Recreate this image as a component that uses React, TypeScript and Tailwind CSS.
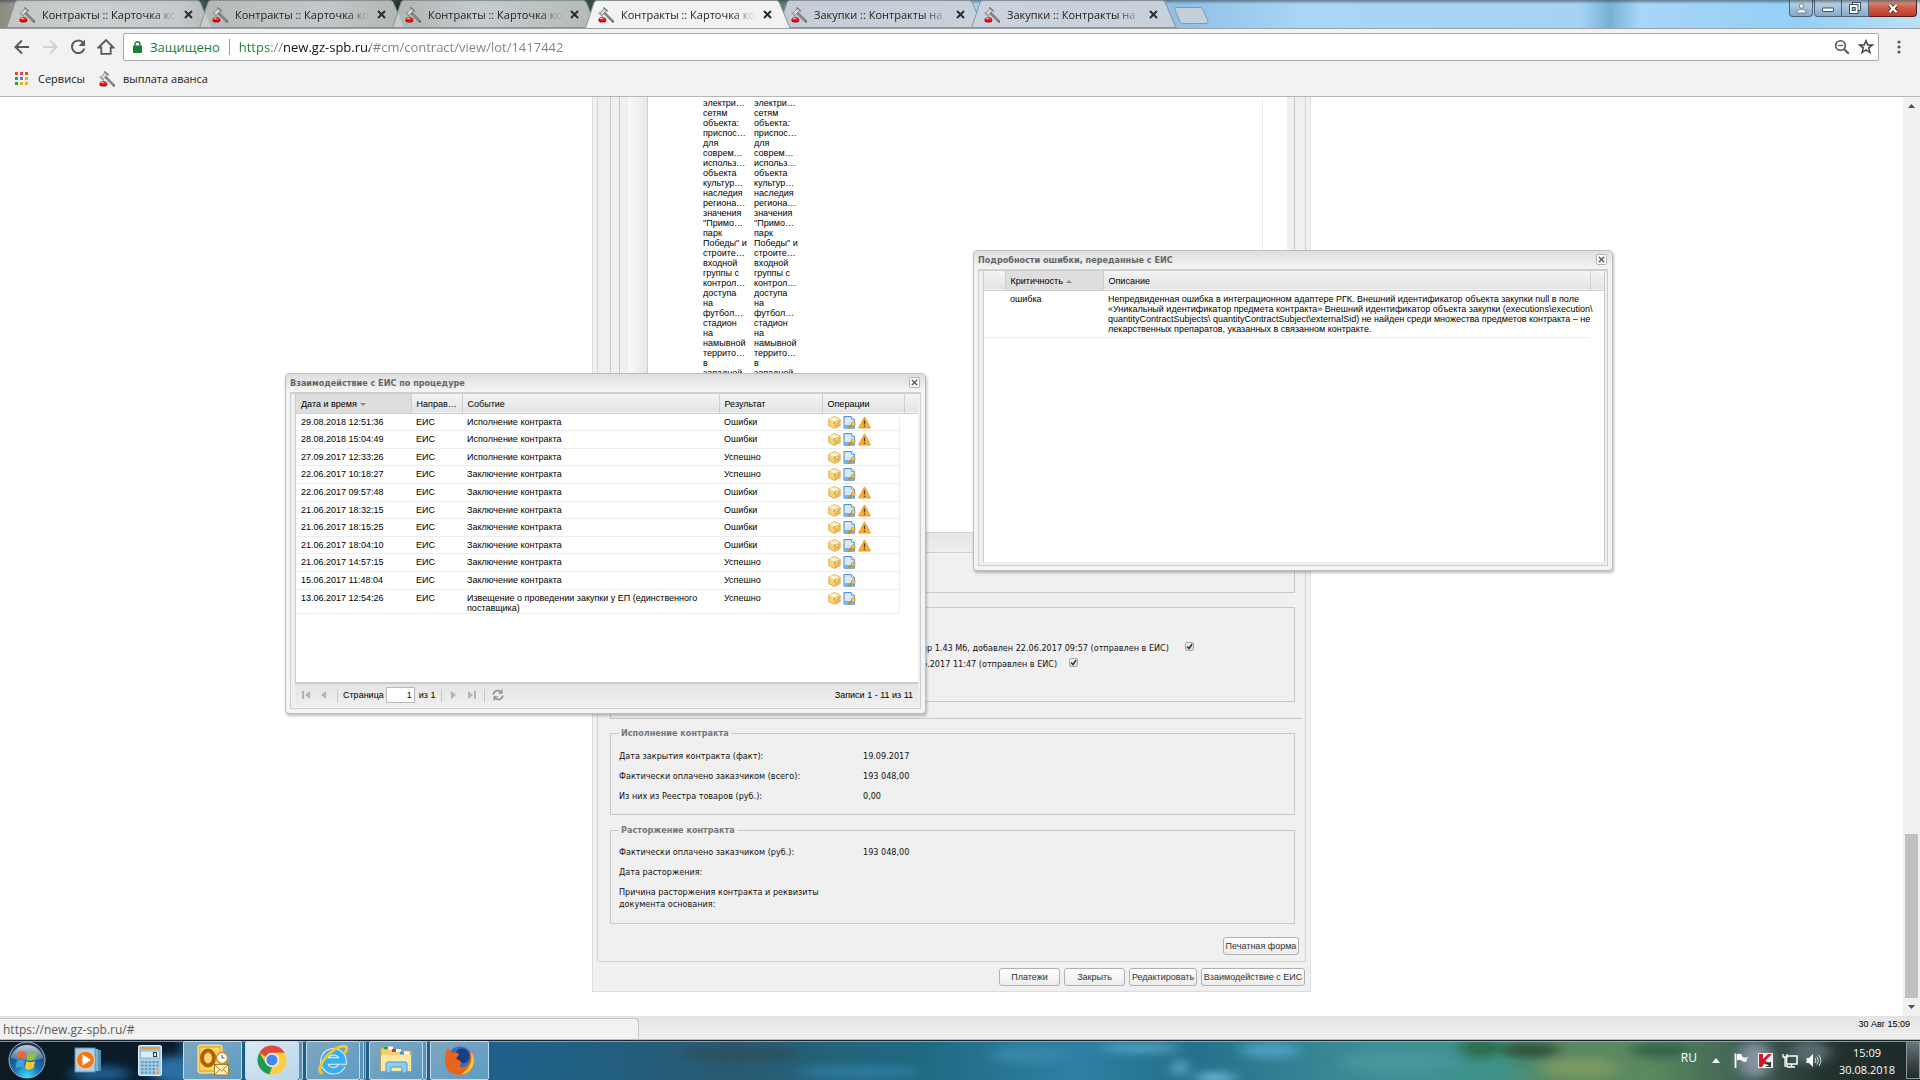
import React from 'react'

interface EventRow {
  date: string
  event: string
  ok: boolean
}

const tabs = [
  { title: 'Контракты :: Карточка ко', active: false },
  { title: 'Контракты :: Карточка ко', active: false },
  { title: 'Контракты :: Карточка ко', active: false },
  { title: 'Контракты :: Карточка ко', active: true },
  { title: 'Закупки :: Контракты на', active: false },
  { title: 'Закупки :: Контракты на', active: false },
]

const events: EventRow[] = [
  { date: '29.08.2018 12:51:36', event: 'Исполнение контракта', ok: false },
  { date: '28.08.2018 15:04:49', event: 'Исполнение контракта', ok: false },
  { date: '27.09.2017 12:33:26', event: 'Исполнение контракта', ok: true },
  { date: '22.06.2017 10:18:27', event: 'Заключение контракта', ok: true },
  { date: '22.06.2017 09:57:48', event: 'Заключение контракта', ok: false },
  { date: '21.06.2017 18:32:15', event: 'Заключение контракта', ok: false },
  { date: '21.06.2017 18:15:25', event: 'Заключение контракта', ok: false },
  { date: '21.06.2017 18:04:10', event: 'Заключение контракта', ok: false },
  { date: '21.06.2017 14:57:15', event: 'Заключение контракта', ok: true },
  { date: '15.06.2017 11:48:04', event: 'Заключение контракта', ok: true },
  { date: '13.06.2017 12:54:26', event: 'Извещение о проведении закупки у ЕП (единственного поставщика)', ok: true },
]

const words = [
  'электри…', 'сетям', 'объекта:', 'приспос…', 'для', 'соврем…', 'использ…', 'объекта', 'культур…',
  'наследия', 'региона…', 'значения', '"Примо…', 'парк', 'Победы" и', 'строите…', 'входной', 'группы с',
  'контрол…', 'доступа', 'на', 'футбол…', 'стадион', 'на', 'намывной', 'террито…', 'в', 'западной',
]

/* ---------- icons ---------- */

function Gavel() {
  return (
    <svg className="w-4 h-4 shrink-0" viewBox="0 0 16 16">
      <path d="M7 6.5L15 14.5" stroke="#5d5d5d" strokeWidth="2.4" strokeLinecap="round" />
      <path d="M7 6.5L14.5 14" stroke="#b5b5b5" strokeWidth="1" />
      <path d="M1.6 6.4L6.4 1.2L8.8 3.2L4 8.4Z" fill="#dcdcdc" stroke="#777" strokeWidth="0.8" />
      <path d="M5.6 0.8L9.4 4" stroke="#777" strokeWidth="1.3" strokeLinecap="round" />
      <path d="M1 6L4.6 9.2" stroke="#999" strokeWidth="1.3" strokeLinecap="round" />
      <ellipse cx="4.4" cy="13" rx="4" ry="2.6" fill="#b80d0d" />
      <ellipse cx="4.4" cy="11.8" rx="3.4" ry="1.8" fill="#ee2b2b" />
      <ellipse cx="3.4" cy="11.4" rx="1.2" ry="0.7" fill="#ffc9c9" />
    </svg>
  )
}

function BoxIcon() {
  return (
    <svg className="w-[13px] h-[13px]" viewBox="0 0 13 13">
      <path d="M6.5 0.5L12.2 3.2V9.6L6.5 12.5L0.8 9.6V3.2Z" fill="#f6d27a" stroke="#d3a040" strokeWidth="0.8" />
      <path d="M6.5 0.9L11.8 3.3L6.5 6L1.2 3.3Z" fill="#fdecb8" />
      <path d="M6.5 6L11.8 3.4V9.4L6.5 12.1Z" fill="#eab950" />
      <path d="M4 2L9 4.6V6.8L7.6 7.4V5.4L2.9 2.6Z" fill="#fffbe8" />
      <path d="M6.5 6V7.6M6.5 6L8.6 5" stroke="#b07d22" strokeWidth="0.8" />
    </svg>
  )
}

function DocIcon() {
  return (
    <svg className="w-[13px] h-[13px]" viewBox="0 0 13 13">
      <path d="M1 0.6H8.4L11.4 3.4V12.2H1Z" fill="#d8e9fb" stroke="#4a86cc" strokeWidth="1" />
      <path d="M8.4 0.8V3.4H11.2" fill="#fff" stroke="#4a86cc" strokeWidth="0.7" />
      <path d="M1.6 9H11V11.8H1.6Z" fill="#6fb2ec" />
      <path d="M6 11.8L9.4 8.4" stroke="#c58c1e" strokeWidth="2" strokeLinecap="round" />
      <circle cx="10.2" cy="8" r="2.1" fill="#f2c34c" stroke="#c58c1e" strokeWidth="0.6" />
    </svg>
  )
}

function WarnIcon() {
  return (
    <svg className="w-[13px] h-[13px]" viewBox="0 0 13 13">
      <path d="M6.5 0.9L12.4 12H0.6Z" fill="#fbb03c" stroke="#ee9a2a" strokeWidth="1" strokeLinejoin="round" />
      <path d="M6.5 4.4V8.4" stroke="#5c3a0a" strokeWidth="1.3" />
      <circle cx="6.5" cy="10.2" r="0.8" fill="#5c3a0a" />
    </svg>
  )
}

function SortArrow({ up }: { up?: boolean }) {
  return (
    <svg className="ml-[3px] inline-block w-[6px] h-[3px] align-middle" viewBox="0 0 6 3">
      <path d={up ? 'M0 3L3 0L6 3Z' : 'M0 0L3 3L6 0Z'} fill="#8a8a8a" />
    </svg>
  )
}

/* ---------- browser chrome ---------- */

function BrowserTab({ title, active, index }: { title: string; active: boolean; index: number }) {
  const fill = active ? '#f2f2f2' : index < 3 ? 'rgba(205,208,206,0.84)' : 'rgba(203,210,218,0.93)'
  return (
    <div className={`relative flex items-center h-7 w-[193px] pl-[13px] pr-1 ${active ? 'z-10' : ''}`}>
      <svg className="absolute left-0 top-0 w-[208px] h-7 -z-0" viewBox="0 0 208 28">
        <path d="M0.5 28L9 2.5Q9.8 0.5 12 0.5H191Q193.5 0.5 194.3 2.5L205 28" fill={fill} stroke="#8b9097" strokeWidth="1" />
        {!active && <path d="M0 27.5H206" stroke="#8b9097" />}
      </svg>
      <div className="relative flex items-center w-full min-w-0 pt-px">
        <Gavel />
        <button className="ml-[7px] flex-1 min-w-0 whitespace-nowrap text-left text-[11px] leading-4 text-[#222] [mask-image:linear-gradient(90deg,#000_82%,transparent)]">
          {title}
        </button>
        <button aria-label="Закрыть вкладку" className="ml-1 w-[14px] h-[14px] shrink-0 flex items-center justify-center">
          <svg className="w-[9px] h-[9px]" viewBox="0 0 9 9"><path d="M1 1L8 8M8 1L1 8" stroke="#2b2b2b" strokeWidth="2" /></svg>
        </button>
      </div>
    </div>
  )
}

function WindowButtons() {
  const glass = 'h-[17px] flex items-center justify-center border border-t-0 border-[#4d6377] bg-linear-to-b from-[#c3d8ea] via-[#a8c4dc] via-45% to-[#86a8c6]'
  return (
    <div className="ml-auto flex items-start mr-[3px] self-start">
      <button aria-label="Пользователь" className={`${glass} w-6 rounded-b mr-px`}>
        <svg className="w-[11px] h-[11px]" viewBox="0 0 11 11"><circle cx="5.5" cy="3" r="2.2" fill="#fff" stroke="#4d6377" strokeWidth="0.7" /><path d="M1 10V7.5Q5.5 4.8 10 7.5V10Z" fill="#fff" stroke="#4d6377" strokeWidth="0.7" /></svg>
      </button>
      <button aria-label="Свернуть" className={`${glass} w-7 rounded-bl`}>
        <svg className="w-3 h-3" viewBox="0 0 12 12"><rect x="0.5" y="6" width="11" height="3.5" rx="0.5" fill="#fff" stroke="#3d4f5f" /></svg>
      </button>
      <button aria-label="Восстановить" className={`${glass} w-[27px] border-l-0`}>
        <svg className="w-3 h-3" viewBox="0 0 12 12"><rect x="3.5" y="0.5" width="8" height="8" fill="#fff" stroke="#3d4f5f" /><rect x="0.5" y="2.5" width="8.5" height="9" fill="#fff" stroke="#3d4f5f" /><rect x="3.2" y="5.5" width="3" height="3" fill="#8ba" stroke="#3d4f5f" /></svg>
      </button>
      <button aria-label="Закрыть" className="h-[17px] w-12 flex items-center justify-center rounded-br border border-l-0 border-t-0 border-[#5b1a14] bg-linear-to-b from-[#e2a497] via-[#cf5e4b] via-45% to-[#c13a25]">
        <svg className="w-3 h-[11px]" viewBox="0 0 12 11"><path d="M2.5 1.8L9.5 9.2M9.5 1.8L2.5 9.2" stroke="#4a2a2a" strokeWidth="4" /><path d="M2.5 1.8L9.5 9.2M9.5 1.8L2.5 9.2" stroke="#fff" strokeWidth="2.4" /></svg>
      </button>
    </div>
  )
}

function TabStrip() {
  return (
    <div className="relative isolate flex items-end h-[29px] pl-[6px] border-b border-[#9aa0a6] bg-[linear-gradient(90deg,#8d8b80_0px,#b9c4d0_90px,#9aa8b5_180px,#2f4a3f_208px,#8fa0ac_320px,#1e332a_400px,#9cb6cf_480px,#31533f_590px,#55806c_780px,#7f9fbe_820px,#8fb2cc_950px,#a7d2f7_975px,#8fc0e4_1180px,#a9d5f6_1300px,#a6d2f3_1580px,#76b2d4_1610px,#a9d5f8_1640px,#93d0f5_1800px,#bcdff5_1920px)]">
      <div className="absolute inset-x-0 top-0 h-1 bg-linear-to-b from-[#33424e] to-transparent opacity-60" />
      {tabs.map((t, i) => <BrowserTab key={i} title={t.title} active={t.active} index={i} />)}
      <button aria-label="Новая вкладка" className="ml-[10px] mb-1 w-[35px] h-[17px]">
        <svg className="w-[35px] h-[17px]" viewBox="0 0 35 17"><path d="M2 0.5H26Q28 0.5 29 2.5L34 14Q34.5 16.5 32 16.5H9Q7 16.5 6 14.5L1 2.5Q0.5 0.5 2 0.5Z" fill="#c3cfda" stroke="#8796a3" /></svg>
      </button>
      <WindowButtons />
    </div>
  )
}

function Toolbar() {
  return (
    <div className="flex items-center h-9 bg-[#f2f2f2] pl-[13px] pr-[13px]">
      <div className="flex items-center gap-[10px]">
        <button aria-label="Назад"><svg className="w-[18px] h-[18px]" viewBox="0 0 18 18" fill="none" stroke="#5a5a5a" strokeWidth="2"><path d="M16 9H3M9 2.5L2.5 9L9 15.5" /></svg></button>
        <button aria-label="Вперёд"><svg className="w-[18px] h-[18px]" viewBox="0 0 18 18" fill="none" stroke="#d2d2d2" strokeWidth="2"><path d="M2 9H15M9 2.5L15.5 9L9 15.5" /></svg></button>
        <button aria-label="Обновить"><svg className="w-[18px] h-[18px]" viewBox="0 0 18 18"><path d="M14.3 5A6.3 6.3 0 1 0 15.3 10.5" fill="none" stroke="#5a5a5a" strokeWidth="2" /><path d="M16 1.5V8H9.5Z" fill="#5a5a5a" /></svg></button>
        <button aria-label="Домой"><svg className="w-[18px] h-[18px]" viewBox="0 0 18 18" fill="none" stroke="#5a5a5a" strokeWidth="1.8"><path d="M1.5 9.5L9 2L16.5 9.5H13.7V15.8H4.3V9.5Z" /></svg></button>
      </div>
      <div className="ml-2 flex-1 flex items-center h-7 bg-white border border-[#a9a9a9] rounded-xs pl-[9px] pr-1">
        <svg className="w-[9px] h-3" viewBox="0 0 9 12"><path d="M2 5V3.2A2.5 2.5 0 0 1 7 3.2V5" fill="none" stroke="#188038" strokeWidth="1.4" /><rect y="4.5" width="9" height="7.5" rx="0.8" fill="#188038" /></svg>
        <span className="ml-2 text-[13px] leading-5 text-[#188038]">Защищено</span>
        <span className="mx-[9px] w-px h-4 bg-[#9a9a9a]" />
        <input
          aria-label="Адрес"
          defaultValue="https://new.gz-spb.ru/#cm/contract/view/lot/1417442"
          className="flex-1 min-w-0 text-[13px] leading-5 outline-none text-transparent caret-black bg-clip-text bg-[linear-gradient(90deg,#188038_32px,#808080_32px,#808080_45px,#111_45px,#111_131px,#808080_131px)]"
        />
        <button aria-label="Масштаб" className="mr-2"><svg className="w-4 h-4" viewBox="0 0 16 16" fill="none" stroke="#555"><circle cx="6.5" cy="6.5" r="4.8" strokeWidth="1.6" /><path d="M4.2 6.5H8.8" strokeWidth="1.2" /><path d="M10 10L14.8 14.8" strokeWidth="2" /></svg></button>
        <button aria-label="Закладка"><svg className="w-4 h-4" viewBox="0 0 16 16" fill="none" stroke="#444" strokeWidth="1.5"><path d="M8 1.8L9.8 6H14.4L10.7 8.9L12 13.6L8 10.9L4 13.6L5.3 8.9L1.6 6H6.2Z" /></svg></button>
      </div>
      <button aria-label="Меню" className="ml-[12px] w-4 h-4 flex items-center justify-center">
        <svg className="w-1 h-[14px]" viewBox="0 0 4 14" fill="#5a5a5a"><circle cx="2" cy="2" r="1.6" /><circle cx="2" cy="7" r="1.6" /><circle cx="2" cy="12" r="1.6" /></svg>
      </button>
    </div>
  )
}

function Bookmarks() {
  const colors = ['#e8453c', '#e8453c', '#e8453c', '#2a9d4e', '#4284f3', '#f2b01e', '#2a9d4e', '#f2b01e', '#f2b01e']
  return (
    <div className="flex items-center h-8 pb-1 bg-[#f2f2f2] border-b border-[#b6b6b6] pl-[15px] text-[11px] leading-4 text-[#1b1b1b]">
      <a href="#apps" className="flex items-center">
        <svg className="w-[13px] h-[13px]" viewBox="0 0 13 13">
          {colors.map((c, i) => <rect key={i} x={(i % 3) * 5} y={Math.floor(i / 3) * 5} width="3" height="3" fill={c} />)}
        </svg>
        <span className="ml-[10px]">Сервисы</span>
      </a>
      <a href="#avans" className="ml-[14px] flex items-center"><Gavel /><span className="ml-2">выплата аванса</span></a>
    </div>
  )
}

/* ---------- page ---------- */

function GroupBox({ title, children, className }: { title: string; children: React.ReactNode; className?: string }) {
  return (
    <fieldset className={`border border-[#c9c9c9] pl-2 ${className ?? ''}`}>
      <legend className="px-[2px] font-bold leading-3 text-[#777]">{title}</legend>
      {children}
    </fieldset>
  )
}

function Field({ label, value }: { label: string; value?: string }) {
  return (
    <div className="flex min-h-5 py-1">
      <span className="w-[244px] pr-8 leading-3 text-[#111]">{label}</span>
      <span className="leading-3 text-[#111]">{value}</span>
    </div>
  )
}

function ExtButton({ children, className }: { children: React.ReactNode; className: string }) {
  return (
    <button className={`h-[18px] rounded-[3px] border border-[#b0b0b0] bg-linear-to-b from-white to-[#ececec] text-[9px] leading-4 whitespace-nowrap text-[#333] font-['Liberation_Sans',sans-serif] ${className}`}>
      {children}
    </button>
  )
}

function Tick({ id }: { id: string }) {
  return (
    <span className="relative inline-block w-[9px] h-[9px] shrink-0">
      <input id={id} type="checkbox" defaultChecked className="block appearance-none w-[9px] h-[9px] rounded-xs border border-[#a8a8a8] bg-linear-to-b from-[#f0f0f0] to-[#dcdcdc]" />
      <svg className="absolute inset-0 pointer-events-none" viewBox="0 0 9 9"><path d="M2 4.5L4 6.5L7.2 2" fill="none" stroke="#333" strokeWidth="1.5" /></svg>
    </span>
  )
}

function ContractPanel() {
  return (
    <div className="mx-auto w-[719px] border border-t-0 border-[#dcdcdc] bg-[#f0f0f0] px-1 text-[9px] font-['DejaVu_Sans_Condensed','DejaVu_Sans',sans-serif]">
      <div className="border border-t-0 border-[#d4d4d4] pb-[6px]">
        <div className="ml-3 mr-[10px] h-[496px] border border-t-0 border-[#c9c9c9] pl-2 pr-[7px]">
          <div className="border-l border-[#c9c9c9]">
            <div className="flex h-[435px] pl-2">
              <div className="w-5 border-r border-[#d0d0d0] bg-linear-to-r from-[#f9f9f9] to-[#e9e9ec]" />
              <div className="flex flex-1 bg-white pt-px pl-[55px] gap-2 leading-[10px] overflow-hidden font-['Liberation_Sans',sans-serif]">
                <div className="w-[43px] whitespace-nowrap">{words.map((w, i) => <div key={i}>{w}</div>)}</div>
                <div className="w-[43px] whitespace-nowrap">{words.map((w, i) => <div key={i}>{w}</div>)}</div>
                <div className="ml-auto mr-6 w-px bg-[#ededed]" />
              </div>
            </div>
            <div className="h-[21px] border-y border-[#d0d0d0] bg-linear-to-b from-[#e6e6e6] to-[#eeeeee]" />
          </div>
        </div>
        <div className="ml-3 mr-[3px] border-b border-l border-[#c9c9c9] pt-[14px] pb-4">
          <div className="mr-[7px] h-[95px] border border-l-0 border-[#c9c9c9] pt-[34px] pl-[311px] leading-3 text-[#111]">
            <div className="flex h-4 items-start">
              <label htmlFor="file1" className="whitespace-nowrap">ер 1.43 Мб, добавлен 22.06.2017 09:57 (отправлен в ЕИС)</label>
              <span className="ml-4"><Tick id="file1" /></span>
            </div>
            <div className="flex h-4 items-start">
              <label htmlFor="file2" className="whitespace-nowrap">6.2017 11:47 (отправлен в ЕИС)</label>
              <span className="ml-3"><Tick id="file2" /></span>
            </div>
          </div>
        </div>
        <div className="ml-3 mr-[10px] pt-2 flex flex-col gap-[9px]">
          <GroupBox title="Исполнение контракта" className="h-[88px] pt-[7px]">
            <Field label="Дата закрытия контракта (факт):" value="19.09.2017" />
            <Field label="Фактически оплачено заказчиком (всего):" value="193 048,00" />
            <Field label="Из них из Реестра товаров (руб.):" value="0,00" />
          </GroupBox>
          <GroupBox title="Расторжение контракта" className="h-[100px] pt-[6px]">
            <Field label="Фактически оплачено заказчиком (руб.):" value="193 048,00" />
            <Field label="Дата расторжения:" />
            <Field label="Причина расторжения контракта и реквизиты документа основания:" />
          </GroupBox>
        </div>
        <div className="mt-[13px] mr-[6px] flex justify-end"><ExtButton className="w-[76px]">Печатная форма</ExtButton></div>
      </div>
      <div className="flex justify-end gap-1 pt-[6px] pb-[5px] pr-px">
        <ExtButton className="w-[61px]">Платежи</ExtButton>
        <ExtButton className="w-[61px]">Закрыть</ExtButton>
        <ExtButton className="w-[68px]">Редактировать</ExtButton>
        <ExtButton className="w-[104px]">Взаимодействие с ЕИС</ExtButton>
      </div>
    </div>
  )
}

function ExtWindow({ title, className, children }: { title: string; className: string; children: React.ReactNode }) {
  return (
    <section className={`absolute flex flex-col rounded-[4px] border border-[#bdbdbd] bg-[#f4f4f4] px-1 pb-1 shadow-[1px_2px_3px_rgba(0,0,0,0.25)] ${className}`}>
      <header className="-mx-1 flex h-[18px] shrink-0 items-center justify-between rounded-t-[4px] bg-linear-to-b from-[#dedede] to-[#f5f5f5] pb-px pl-1 pr-[5px]">
        <h2 className="text-[9px] leading-3 font-bold text-[#666] font-['DejaVu_Sans_Condensed','DejaVu_Sans',sans-serif]">{title}</h2>
        <button aria-label="Закрыть окно" className="w-[11px] h-[11px] flex items-center justify-center rounded-xs border border-[#b4b4b4] bg-white">
          <svg className="w-[7px] h-[7px]" viewBox="0 0 7 7"><path d="M0.8 0.8L6.2 6.2M6.2 0.8L0.8 6.2" stroke="#555" strokeWidth="1.3" /></svg>
        </button>
      </header>
      <div className="flex min-h-0 flex-1 flex-col border border-t-2 border-[#cfcfcf] bg-[#efefef] pl-1 pr-[2px] pb-[2px] text-[9px] leading-[10px] text-black font-['Liberation_Sans',sans-serif]">
        {children}
      </div>
    </section>
  )
}

const th = 'h-[19px] border-r border-[#cfcfcf] pl-[5px] pt-px text-left font-normal whitespace-nowrap overflow-hidden'

function EventsWindow() {
  return (
    <ExtWindow title="Взаимодействие с ЕИС по процедуре" className="left-[285px] top-[276px] w-[641px] h-[341px]">
      <div className="flex-1 border-l border-b-2 border-[#cbcbcb] bg-white">
        <table className="w-full table-fixed border-collapse">
          <colgroup>
            <col className="w-[115px]" /><col className="w-[51px]" /><col className="w-[257px]" /><col className="w-[103px]" /><col className="w-[77px]" /><col className="w-[5px]" /><col />
          </colgroup>
          <thead className="bg-linear-to-b from-[#f4f4f4] to-[#e4e4e4] border-b border-[#cfcfcf]">
            <tr>
              <th className={`${th} bg-[#dedede]`}>Дата и время<SortArrow /></th>
              <th className={th}>Направ…</th>
              <th className={th}>Событие</th>
              <th className={th}>Результат</th>
              <th className={th} colSpan={2}>Операции</th>
              <th />
            </tr>
          </thead>
          <tbody>
            {events.map(e => (
              <tr key={e.date} className="h-[18px] nth-[5n+1]:h-[17px] nth-[5n+3]:h-[17px] last:h-[27px] align-top [&>td]:border-b [&>td]:border-[#ededed] [&>td]:pl-[5px] [&>td]:pt-[3px]">
                <td>{e.date}</td>
                <td>ЕИС</td>
                <td>{e.event}</td>
                <td>{e.ok ? 'Успешно' : 'Ошибки'}</td>
                <td className="border-r">
                  <div className="-mt-px -mb-1 flex h-[13px] gap-[2px] pl-px">
                    <button aria-label="Пакет"><BoxIcon /></button>
                    <button aria-label="Документ"><DocIcon /></button>
                    {!e.ok && <button aria-label="Ошибка"><WarnIcon /></button>}
                  </div>
                </td>
              </tr>
            ))}
          </tbody>
        </table>
      </div>
      <div className="flex h-[22px] shrink-0 items-center bg-linear-to-b from-[#e4e4e4] to-[#efefef] pl-[7px] pr-[5px]">
        <button aria-label="Первая" className="w-3"><svg className="w-[9px] h-2" viewBox="0 0 9 8" fill="#b3b3b3"><rect width="2" height="8" /><path d="M8 0V8L3 4Z" /></svg></button>
        <button aria-label="Предыдущая" className="ml-[7px] w-2"><svg className="w-[5px] h-2" viewBox="0 0 5 8" fill="#b3b3b3"><path d="M5 0V8L0 4Z" /></svg></button>
        <span className="ml-2 h-[13px] w-px bg-[#c9c9c9]" />
        <label htmlFor="page" className="ml-[5px]">Страница</label>
        <input id="page" defaultValue="1" className="ml-[2px] h-4 w-[29px] border border-[#b9b9b9] bg-white pr-[2px] text-right" />
        <span className="ml-1">из 1</span>
        <span className="ml-[6px] h-[13px] w-px bg-[#c9c9c9]" />
        <button aria-label="Следующая" className="ml-[9px] w-[6px]"><svg className="w-[5px] h-2" viewBox="0 0 5 8" fill="#b3b3b3"><path d="M0 0V8L5 4Z" /></svg></button>
        <button aria-label="Последняя" className="ml-[10px] w-[9px]"><svg className="w-[9px] h-2" viewBox="0 0 9 8" fill="#b3b3b3"><rect x="7" width="2" height="8" /><path d="M1 0V8L6 4Z" /></svg></button>
        <span className="ml-[8px] h-[13px] w-px bg-[#c9c9c9]" />
        <button aria-label="Обновить список" className="ml-[7px]">
          <svg className="w-3 h-3" viewBox="0 0 12 12" fill="none" stroke="#8a8a8a" strokeWidth="1.6"><path d="M1.2 5.5A4.5 4.5 0 0 1 9 3M10.8 6.5A4.5 4.5 0 0 1 3 9" /><path d="M9.8 0.5V4H6.5M2.2 11.5V8H5.5" strokeWidth="1.3" /></svg>
        </button>
        <span className="ml-auto">Записи 1 - 11 из 11</span>
      </div>
    </ExtWindow>
  )
}

function ErrorWindow() {
  return (
    <ExtWindow title="Подробности ошибки, переданные с ЕИС" className="left-[973px] top-[153px] w-[640px] h-[321px]">
      <div className="mb-px flex-1 border-x border-[#cbcbcb] bg-white">
        <table className="w-full table-fixed border-collapse">
          <colgroup>
            <col className="w-[21px]" /><col className="w-[98px]" /><col className="w-[487px]" /><col />
          </colgroup>
          <thead className="bg-linear-to-b from-[#f4f4f4] to-[#e4e4e4] border-b border-[#cfcfcf]">
            <tr>
              <th className={th} />
              <th className={`${th} bg-[#dedede]`}>Критичность<SortArrow up /></th>
              <th className={th}>Описание</th>
              <th />
            </tr>
          </thead>
          <tbody>
            <tr className="align-top [&>td]:border-b [&>td]:border-[#ededed] [&>td]:pl-[5px] [&>td]:pt-[3px] [&>td]:pb-[3px]">
              <td />
              <td>ошибка</td>
              <td className="whitespace-nowrap">
                Непредвиденная ошибка в интеграционном адаптере РГК. Внешний идентификатор объекта закупки null в поле<br />
                «Уникальный идентификатор предмета контракта» Внешний идентификатор объекта закупки (executions\execution\<br />
                quantityContractSubjects\ quantityContractSubject\externalSid) не найден среди множества предметов контракта – не<br />
                лекарственных препаратов, указанных в связанном контракте.
              </td>
            </tr>
          </tbody>
        </table>
      </div>
    </ExtWindow>
  )
}

function Scrollbar() {
  return (
    <div className="flex w-[17px] shrink-0 flex-col items-center bg-[#f1f1f1] py-[6px]">
      <svg className="w-[7px] h-[5px]" viewBox="0 0 7 5"><path d="M0 5L3.5 1L7 5Z" fill="#505050" /></svg>
      <div className="mt-auto mb-[7px] w-[13px] h-[164px] bg-[#c1c1c1]" />
      <svg className="w-[7px] h-[5px]" viewBox="0 0 7 5"><path d="M0 0L3.5 4L7 0Z" fill="#505050" /></svg>
    </div>
  )
}

/* ---------- taskbar ---------- */

function TaskButton({ label, active, stack, children }: { label: string; active?: boolean; stack?: number; children: React.ReactNode }) {
  const tone = active
    ? 'from-[#dbe9f4] to-[#b9d6ea]'
    : 'from-[#7fa6bf] to-[#5b9cc6]'
  return (
    <div className="flex h-[39px] mr-[3px]">
      <button aria-label={label} className={`flex items-center justify-center rounded-xs border border-[#c3dbea] bg-linear-to-br ${tone} ${stack ? 'w-[54px]' : 'w-[59px]'}`}>
        {children}
      </button>
      {stack && <span className="w-1 rounded-r-xs border border-l-0 border-[#b5d2e4] bg-[#5a93b5]" />}
      {stack === 2 && <span className="w-[2px] rounded-r-xs border border-l-0 border-[#8fb4c9] bg-[#3c789c]" />}
    </div>
  )
}

function Wallpaper() {
  return (
    <svg className="absolute inset-0 h-full w-full" viewBox="0 0 1920 40" preserveAspectRatio="none">
      <defs>
        <linearGradient id="wall" x1="0" x2="1920" gradientUnits="userSpaceOnUse">
          <stop offset="0" stopColor="#0d1a22" />
          <stop offset="0.09" stopColor="#0b1c2b" />
          <stop offset="0.1" stopColor="#1a5c8c" />
          <stop offset="0.28" stopColor="#1f6187" />
          <stop offset="0.38" stopColor="#295b72" />
          <stop offset="0.48" stopColor="#1f6a82" />
          <stop offset="0.56" stopColor="#2f7fa4" />
          <stop offset="0.62" stopColor="#24708c" />
          <stop offset="0.72" stopColor="#3f9098" />
          <stop offset="0.78" stopColor="#3d9287" />
          <stop offset="0.81" stopColor="#5c8763" />
          <stop offset="0.86" stopColor="#5a8a5d" />
          <stop offset="0.91" stopColor="#3f5f55" />
          <stop offset="0.95" stopColor="#24332f" />
          <stop offset="1" stopColor="#1c2829" />
        </linearGradient>
        <filter id="soft"><feGaussianBlur stdDeviation="7 4" /></filter>
      </defs>
      <rect width="1920" height="40" fill="url(#wall)" />
      <g filter="url(#soft)">
        <ellipse cx="100" cy="34" rx="30" ry="8" fill="#1d5c8e" />
        <ellipse cx="175" cy="30" rx="26" ry="14" fill="#2a6ea6" />
        <ellipse cx="740" cy="14" rx="60" ry="9" fill="#2a5164" />
        <ellipse cx="860" cy="32" rx="60" ry="6" fill="#2d7da0" />
        <ellipse cx="1030" cy="14" rx="40" ry="9" fill="#3986a8" />
        <ellipse cx="1140" cy="8" rx="40" ry="4" fill="#5aa9c4" />
        <ellipse cx="1180" cy="28" rx="6" ry="8" fill="#6cb6d3" />
        <ellipse cx="1215" cy="38" rx="20" ry="5" fill="#72bcd8" />
        <ellipse cx="1270" cy="10" rx="30" ry="8" fill="#4c9fbe" />
        <ellipse cx="1400" cy="22" rx="60" ry="10" fill="#46979b" />
        <ellipse cx="1480" cy="8" rx="20" ry="10" fill="#2d6c4c" />
        <ellipse cx="1530" cy="10" rx="30" ry="8" fill="#30553b" />
        <ellipse cx="1580" cy="28" rx="40" ry="10" fill="#789a62" />
        <ellipse cx="1660" cy="10" rx="30" ry="8" fill="#35654d" />
        <ellipse cx="1755" cy="20" rx="16" ry="18" fill="#8593a3" />
        <ellipse cx="1810" cy="12" rx="20" ry="12" fill="#586a70" />
      </g>
      <rect width="1920" height="1" fill="#17242f" />
      <rect y="1" width="1920" height="1" fill="#a9c3cf" opacity="0.7" />
    </svg>
  )
}

function Taskbar() {
  return (
    <footer className="relative isolate flex h-10 shrink-0 items-center overflow-hidden text-white">
      <div className="absolute inset-0 -z-10"><Wallpaper /></div>
      <button aria-label="Пуск" className="ml-2">
        <svg className="h-[38px] w-[38px]" viewBox="0 0 38 38">
          <defs>
            <radialGradient id="orb" cx="0.5" cy="0.95" r="0.9"><stop offset="0" stopColor="#35e0ff" /><stop offset="0.4" stopColor="#1a74b5" /><stop offset="1" stopColor="#1d3550" /></radialGradient>
            <linearGradient id="gloss" x1="0" y1="0" x2="0" y2="1"><stop offset="0" stopColor="#fff" stopOpacity="0.75" /><stop offset="1" stopColor="#fff" stopOpacity="0.15" /></linearGradient>
          </defs>
          <circle cx="19" cy="19" r="18" fill="url(#orb)" stroke="#9db7c9" />
          <path d="M2.5 17A17 17 0 0 1 35.5 17Q19 23 2.5 17Z" fill="url(#gloss)" />
          <path d="M10 11.5Q14 9 18 11L17 18Q13 16 9 18.5Z" fill="#f0642f" />
          <path d="M19.5 11.6Q24 14 28.5 11L27.2 18Q23 21 18.5 18.6Z" fill="#8cc63f" />
          <path d="M8.7 20Q12.5 17.8 16.7 19.7L15.5 27Q11.5 25 7.5 27.5Z" fill="#3f9fe0" />
          <path d="M18.2 20.3Q22.5 22.6 26.9 19.9L25.6 27Q21 30 17 27.5Z" fill="#fdc830" />
        </svg>
      </button>
      <button aria-label="Проигрыватель" className="ml-[28px]">
        <svg className="h-[26px] w-[28px]" viewBox="0 0 28 26"><path d="M8 1L27 3V24L8 25Z" fill="#4f8fb8" /><path d="M4 1L24 2V24L4 25Z" fill="#78b4d6" /><rect x="1" y="1" width="20" height="24" fill="#a8d2ea" stroke="#5b93b5" /><circle cx="11.5" cy="13" r="9" fill="#f07a1c" stroke="#fbd7b1" /><path d="M8.5 7.5L17 13L8.5 18.5Z" fill="#fff" /></svg>
      </button>
      <button aria-label="Калькулятор" className="ml-[36px]">
        <svg className="h-[31px] w-[24px]" viewBox="0 0 24 31"><rect x="0.5" y="0.5" width="23" height="30" rx="1.5" fill="#a9d0ea" stroke="#e0f0fa" /><rect x="2" y="2" width="20" height="2.5" fill="#f09a3e" /><rect x="2.5" y="6" width="19" height="7" fill="#dbeefa" stroke="#6fa2c4" strokeWidth="0.7" /><rect x="15.5" y="7.5" width="3" height="4" fill="none" stroke="#333" />{[0, 1, 2, 3].map(r => [0, 1, 2, 3, 4].map(c => <rect key={`${r}${c}`} x={3 + c * 3.8} y={16 + r * 3.5} width="2.6" height="2.2" fill={c === 4 && r > 1 ? '#f09a3e' : '#6c9cc2'} />))}</svg>
      </button>
      <div className="ml-[21px] flex">
        <TaskButton label="Outlook">
          <svg className="h-8 w-8" viewBox="0 0 32 32"><rect x="1" y="1" width="24" height="28" rx="2" fill="#f3b826" stroke="#fff1c4" /><rect x="3.5" y="4" width="19" height="22" fill="#fdd974" /><ellipse cx="11" cy="14" rx="6" ry="7.5" fill="none" stroke="#b45f06" strokeWidth="4" /><circle cx="25" cy="14" r="5.5" fill="#fff" stroke="#d5961c" strokeWidth="1.5" /><path d="M25 11V14H27.5" stroke="#555" fill="none" /><rect x="17.5" y="20.5" width="14" height="10.5" fill="#fff4c7" stroke="#a67a1e" /><path d="M17.5 20.5L24.5 27L31.5 20.5M17.5 31L22.5 25.5M31.5 31L26.5 25.5" fill="none" stroke="#a67a1e" /></svg>
        </TaskButton>
        <TaskButton label="Chrome" active stack={1}>
          <svg className="h-[30px] w-[30px]" viewBox="0 0 30 30"><circle cx="15" cy="15" r="14.5" fill="#ffcd42" /><path d="M2.4 7.8A14.5 14.5 0 0 1 27.6 7.8H15A7 7 0 0 0 8.7 12Z" fill="#dd4b3e" /><path d="M2.4 7.8L9 18.5A7 7 0 0 0 15 22L14 29.5A14.5 14.5 0 0 1 2.4 7.8Z" fill="#1b9c5a" /><path d="M15 22A7 7 0 0 0 21 18.5L14.5 29.5L12.5 29Z" fill="#ffcd42" /><circle cx="15" cy="15" r="7" fill="#f4f4f4" /><circle cx="15" cy="15" r="5.6" fill="#4587f3" /></svg>
        </TaskButton>
        <TaskButton label="Internet Explorer" stack={2}>
          <svg className="h-8 w-8" viewBox="0 0 32 32"><path d="M25 21.5A9.5 9.5 0 1 1 26 17H8.500" fill="none" stroke="#e6f6fe" strokeWidth="7.5" /><path d="M25 21.5A9.500 9.500 0 1 1 26 17H8.500" fill="none" stroke="#36b0ee" strokeWidth="5.5" /><path d="M5.5 29.5Q-1.5 27 9 13Q21 0.5 28.5 2.5Q31.500 4 27.5 9.5" fill="none" stroke="#fbc91d" strokeWidth="2.8" /></svg>
        </TaskButton>
        <TaskButton label="Проводник" stack={1}>
          <svg className="h-[30px] w-8" viewBox="0 0 32 30"><path d="M1 3H12L14 6H31V26H1Z" fill="#f3cf72" stroke="#d8a93e" /><rect x="4" y="1.5" width="9" height="3" fill="#fff" /><rect x="4" y="1.5" width="4" height="3" fill="#29a347" /><rect x="12" y="4" width="9" height="3" fill="#fff" /><rect x="12" y="4" width="4" height="3" fill="#d43b2a" /><rect x="20" y="6.5" width="9" height="3" fill="#fff" /><rect x="20" y="6.5" width="4" height="3" fill="#3a8fd8" /><rect x="1" y="10" width="30" height="16" fill="#fbe6a3" /><path d="M6 28V19Q6 17 8 17H25Q27 17 27 19V28H22V22H11V28Z" fill="#8ccdf0" stroke="#4f9ac4" /></svg>
        </TaskButton>
        <TaskButton label="Firefox">
          <svg className="h-[31px] w-[31px]" viewBox="0 0 31 31"><circle cx="16" cy="14" r="12.5" fill="#2f6fc0" /><circle cx="18" cy="11" r="7.5" fill="#173e86" /><path d="M2 7Q3 4 4.5 3Q5 6 9 7.5Q14 6.5 15 10Q12 12 12.5 14Q16 15 18 18Q14 21 18 22.5Q24 22 26 15Q27 9 24.5 4Q32 11 30 19Q27 30 15 30Q2 29 1 17Q1 11 2 7Z" fill="#e8641b" /><path d="M26.5 6Q32 13 29 21Q25 29 17 29.5Q25 24 27 17Q28 11 26.5 6Z" fill="#fbc934" /></svg>
        </TaskButton>
      </div>
      <div className="ml-auto flex h-full items-center">
        <span className="mb-1 text-[12px] leading-4">RU</span>
        <svg className="ml-[15px] h-[5px] w-2" viewBox="0 0 8 5"><path d="M0 5L4 0L8 5Z" fill="#fff" /></svg>
        <svg className="ml-[14px] h-[15px] w-[15px]" viewBox="0 0 15 15"><path d="M1.5 0.5V15" stroke="#fff" strokeWidth="1.8" /><path d="M3 1.5Q5.5 0 8 2V8Q5.5 6 3 7.5Z" fill="#fff" /><path d="M8 3.5Q11 5.5 15 3.5Q12 6 13 8.5Q10.5 9.5 8 8Z" fill="#e9e9e9" /></svg>
        <svg className="ml-[9px] h-[15px] w-[15px]" viewBox="0 0 15 15"><rect width="15" height="15" fill="#f4f4f4" /><path d="M1 1H5V6L10 1H14L7.5 7.5L9 9.5L6 11L4 14H1Z" fill="#d4182a" /><path d="M6.500 11Q9 8 11 9.500L13 8.500V14H8V13H11Q10 11 6.500 11Z" fill="#333" /></svg>
        <svg className="ml-[9px] h-[15px] w-4" viewBox="0 0 16 15" fill="none" stroke="#fff"><rect x="4.5" y="3" width="10.5" height="8" strokeWidth="1.5" /><path d="M5 14H13M9.5 11V14" strokeWidth="1.5" /><path d="M1 1V4H5V1M3 4V13H6" strokeWidth="1.3" /></svg>
        <svg className="ml-2 h-[15px] w-4" viewBox="0 0 16 15"><path d="M0.5 5H3L7 1V14L3 10H0.5Z" fill="#fff" /><path d="M9 5Q10.5 7.5 9 10M11 3.5Q13.5 7.5 11 11.5M13 2Q16.5 7.5 13 13" fill="none" stroke="#d8dfe2" /></svg>
        <div className="ml-3 w-[66px] pt-px text-center text-[11px] leading-[17px]">
          <div>15:09</div>
          <div>30.08.2018</div>
        </div>
        <button aria-label="Показать рабочий стол" className="ml-[6px] h-[38px] w-[14px] border border-[#8d9a9c] bg-linear-to-b from-[#6b7678] to-[#20292b]" />
      </div>
    </footer>
  )
}

export default function App() {
  return (
    <div className="flex h-screen min-w-[1400px] flex-col overflow-hidden bg-white font-['Open_Sans','Noto_Sans',sans-serif]">
      <TabStrip />
      <Toolbar />
      <Bookmarks />
      <main className="relative flex min-h-0 flex-1 overflow-hidden">
        <div className="flex-1">
          <ContractPanel />
        </div>
        <Scrollbar />
        <EventsWindow />
        <ErrorWindow />
      </main>
      <div className="flex h-6 shrink-0 justify-between border-b border-[#bdbdbd] bg-linear-to-b from-[#e4e4e4] to-[#efefef]">
        <div className="mt-[2px] w-[639px] rounded-tr border border-l-0 border-b-0 border-[#c4c4c4] bg-[#f2f2f2] pl-[3px] pt-px text-[12px] leading-5 text-[#5a5a5a]">https://new.gz-spb.ru/#</div>
        <span className="pr-[10px] pt-[3px] text-[9px] leading-[10px] text-black font-['Liberation_Sans',sans-serif]">30 Авг 15:09</span>
      </div>
      <Taskbar />
    </div>
  )
}
